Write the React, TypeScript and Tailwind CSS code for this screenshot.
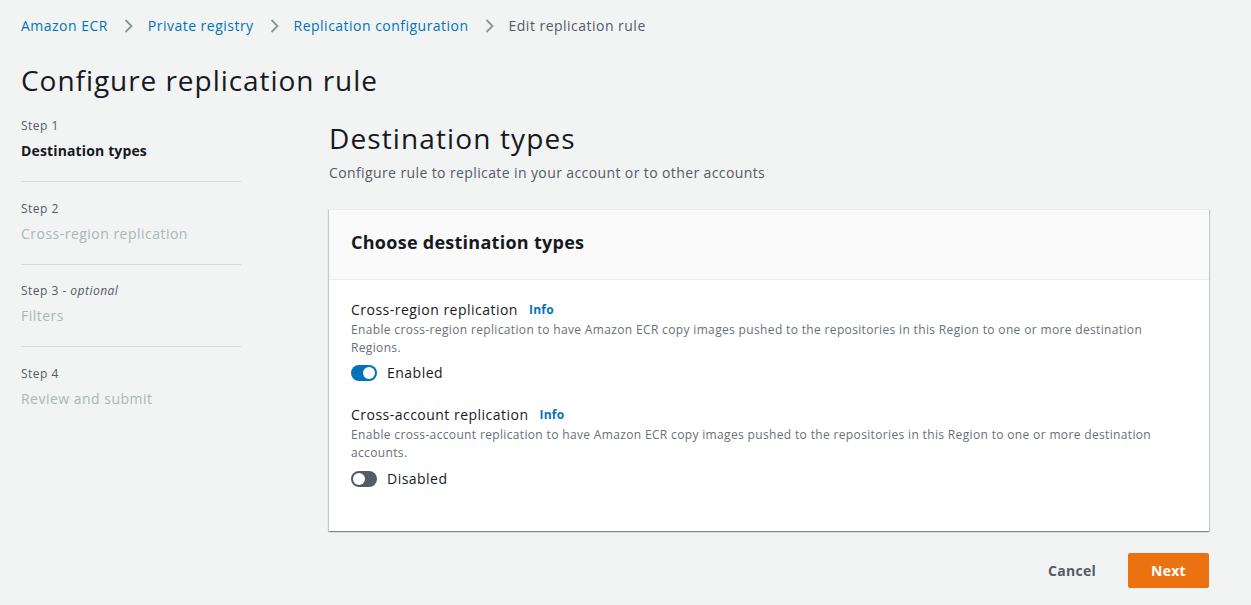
import React from "react";

function Chevron() {
  return (
    <svg width="16" height="16" viewBox="0 0 16 16" className="mx-[12px] shrink-0">
      <path d="M5.5 2 L11.5 8 L5.5 14" fill="none" stroke="#879596" strokeWidth="1.8" />
    </svg>
  );
}

function Toggle({ on }: { on: boolean }) {
  return (
    <span
      className={`relative inline-block w-[26px] h-[16px] rounded-full ${on ? "bg-[#0073bb]" : "bg-[#545b64]"}`}
    >
      <span
        className={`absolute top-[2px] w-[12px] h-[12px] rounded-full bg-white ${on ? "left-[12px]" : "left-[2px]"}`}
      />
    </span>
  );
}

function Step({ n, label, active, optional, last }: { n: number; label: string; active?: boolean; optional?: boolean; last?: boolean }) {
  return (
    <div className={`${last ? "" : "border-b border-[#d5dbdb] pb-[21px] mb-[18.5px]"} w-[220px]`}>
      <div className="text-[12px] leading-[16px] text-[#545b64]">
        Step {n}
        {optional && (
          <>
            {" - "}
            <i>optional</i>
          </>
        )}
      </div>
      <div
        className={`mt-[8px] text-[14px] leading-[18px] ${active ? "font-bold tracking-[0.01em] text-[#16191f]" : "text-[#aab7b8]"}`}
      >
        {label}
      </div>
    </div>
  );
}

export default function App() {
  return (
    <div
      className="min-h-[605px] w-full bg-[#f2f3f3] text-[#16191f] tracking-[0.03em]"
      style={{ fontFamily: "'Open Sans', 'Noto Sans', sans-serif" }}
    >
      <div className="px-[21px] pt-[16px]">
        <nav className="flex items-center h-[20px] text-[14px] leading-[20px]">
          <span className="text-[#0073bb]">Amazon ECR</span>
          <Chevron />
          <span className="text-[#0073bb]">Private registry</span>
          <Chevron />
          <span className="text-[#0073bb]">Replication configuration</span>
          <Chevron />
          <span className="text-[#545b64]">Edit replication rule</span>
        </nav>
        <h1 className="mt-[26px] text-[28px] leading-[36px] font-normal tracking-[0.034em]">Configure replication rule</h1>
        <div className="flex mt-[20px]">
          <div className="w-[308px] shrink-0">
            <Step n={1} label="Destination types" active />
            <Step n={2} label="Cross-region replication" />
            <Step n={3} label="Filters" optional />
            <Step n={4} label="Review and submit" last />
          </div>
          <div className="flex-1 pr-[21px]">
            <h2 className="mt-[2px] text-[28px] leading-[36px] font-normal tracking-[0.04em]">Destination types</h2>
            <p className="mt-[7px] text-[14px] leading-[20px] text-[#545b64] tracking-[0.028em]">
              Configure rule to replicate in your account or to other accounts
            </p>
            <div className="mt-[26px] bg-white border-t border-[#eaeded] shadow-[0_1px_1px_0_rgba(0,28,36,0.3),1px_1px_1px_0_rgba(0,28,36,0.15),-1px_1px_1px_0_rgba(0,28,36,0.15)]">
              <div className="bg-[#fafafa] h-[70px] px-[22px] pb-[6px] flex items-center border-b border-[#eaeded]">
                <h3 className="text-[18px] leading-[22px] font-bold tracking-[0.015em]">Choose destination types</h3>
              </div>
              <div className="px-[22px] pt-[20px] pb-[42px]">
                <div>
                  <div className="flex items-center text-[14px] leading-[20px]">
                    <span>Cross-region replication</span>
                    <span className="ml-[11px] text-[12px] font-bold tracking-[0.02em] text-[#0073bb]">Info</span>
                  </div>
                  <p className="mt-[1px] text-[12px] leading-[18px] text-[#687078] tracking-[0.029em] pr-[8px]">
                    Enable cross-region replication to have Amazon ECR copy images pushed to the repositories in this Region to one or more destination Regions.
                  </p>
                  <label className="mt-[6px] flex items-center gap-[10px] text-[14px] leading-[20px]">
                    <Toggle on />
                    <span>Enabled</span>
                  </label>
                </div>
                <div className="mt-[22px]">
                  <div className="flex items-center text-[14px] leading-[20px]">
                    <span>Cross-account replication</span>
                    <span className="ml-[11px] text-[12px] font-bold tracking-[0.02em] text-[#0073bb]">Info</span>
                  </div>
                  <p className="mt-[1px] text-[12px] leading-[18px] text-[#687078] tracking-[0.029em] pr-[8px]">
                    Enable cross-account replication to have Amazon ECR copy images pushed to the repositories in this Region to one or more destination accounts.
                  </p>
                  <label className="mt-[7px] flex items-center gap-[10px] text-[14px] leading-[20px]">
                    <Toggle on={false} />
                    <span>Disabled</span>
                  </label>
                </div>
              </div>
            </div>
            <div className="mt-[22px] flex justify-end items-center">
              <button className="text-[14px] font-bold tracking-[0.02em] text-[#545b64] px-[20px] h-[35px] mr-[12px]">Cancel</button>
              <button className="text-[14px] font-bold tracking-[0.02em] text-white bg-[#ec7211] rounded-[2px] w-[81px] h-[35px]">Next</button>
            </div>
          </div>
        </div>
      </div>
    </div>
  );
}
